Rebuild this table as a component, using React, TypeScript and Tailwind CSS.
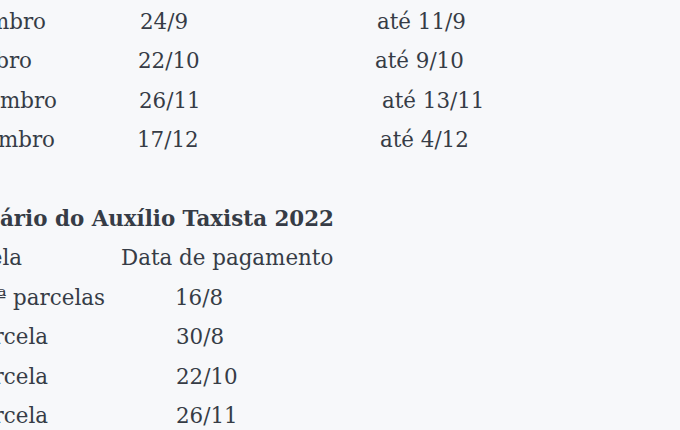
const agenda = [
  { mes: "Setembro", data: "24/9", prazo: "até 11/9", a: "pr-[24px]", b: "pl-[70px]", c: "pl-[77px]" },
  { mes: "Outubro", data: "22/10", prazo: "até 9/10", a: "pr-[38px]", b: "pl-[68px]", c: "pl-[75px]" },
  { mes: "Novembro", data: "26/11", prazo: "até 13/11", a: "pr-[13px]", b: "pl-[69px]", c: "pl-[82px]" },
  { mes: "Dezembro", data: "17/12", prazo: "até 4/12", a: "pr-[15px]", b: "pl-[67px]", c: "pl-[80px]" },
];

const parcelas = [
  { nome: "Parcela", data: "Data de pagamento", a: "pr-[88px]", b: "pl-[11px]" },
  { nome: "1ª e 2ª parcelas", data: "16/8", a: "pr-[5px]", b: "pl-[65px]" },
  { nome: "3ª parcela", data: "30/8", a: "pr-[62px]", b: "pl-[66px]" },
  { nome: "4ª parcela", data: "22/10", a: "pr-[62px]", b: "pl-[66px]" },
  { nome: "5ª parcela", data: "26/11", a: "pr-[62px]", b: "pl-[66px]" },
];

export default function App() {
  return (
    <div className="h-[430px] w-[680px] overflow-hidden bg-[#f7f8fa] font-['DejaVu_Serif',serif] text-[21.4px] leading-[39.4px] text-[#363c46]">
      <div className="-ml-[200px] w-[880px] pt-[2px] whitespace-nowrap">
        {agenda.map((r) => (
          <div key={r.mes} className="flex">
            <div className={`w-[270px] shrink-0 text-right ${r.a}`}>{r.mes}</div>
            <div className={`w-[230px] shrink-0 ${r.b}`}>{r.data}</div>
            <div className={`flex-1 ${r.c}`}>{r.prazo}</div>
          </div>
        ))}

        <h3 className="mt-[39.4px] w-[534px] text-right font-bold">
          Calendário do Auxílio Taxista 2022
        </h3>
        {parcelas.map((r) => (
          <div key={r.nome} className="flex">
            <div className={`w-[310px] shrink-0 text-right ${r.a}`}>{r.nome}</div>
            <div className={`flex-1 ${r.b}`}>{r.data}</div>
          </div>
        ))}
      </div>
    </div>
  );
}
